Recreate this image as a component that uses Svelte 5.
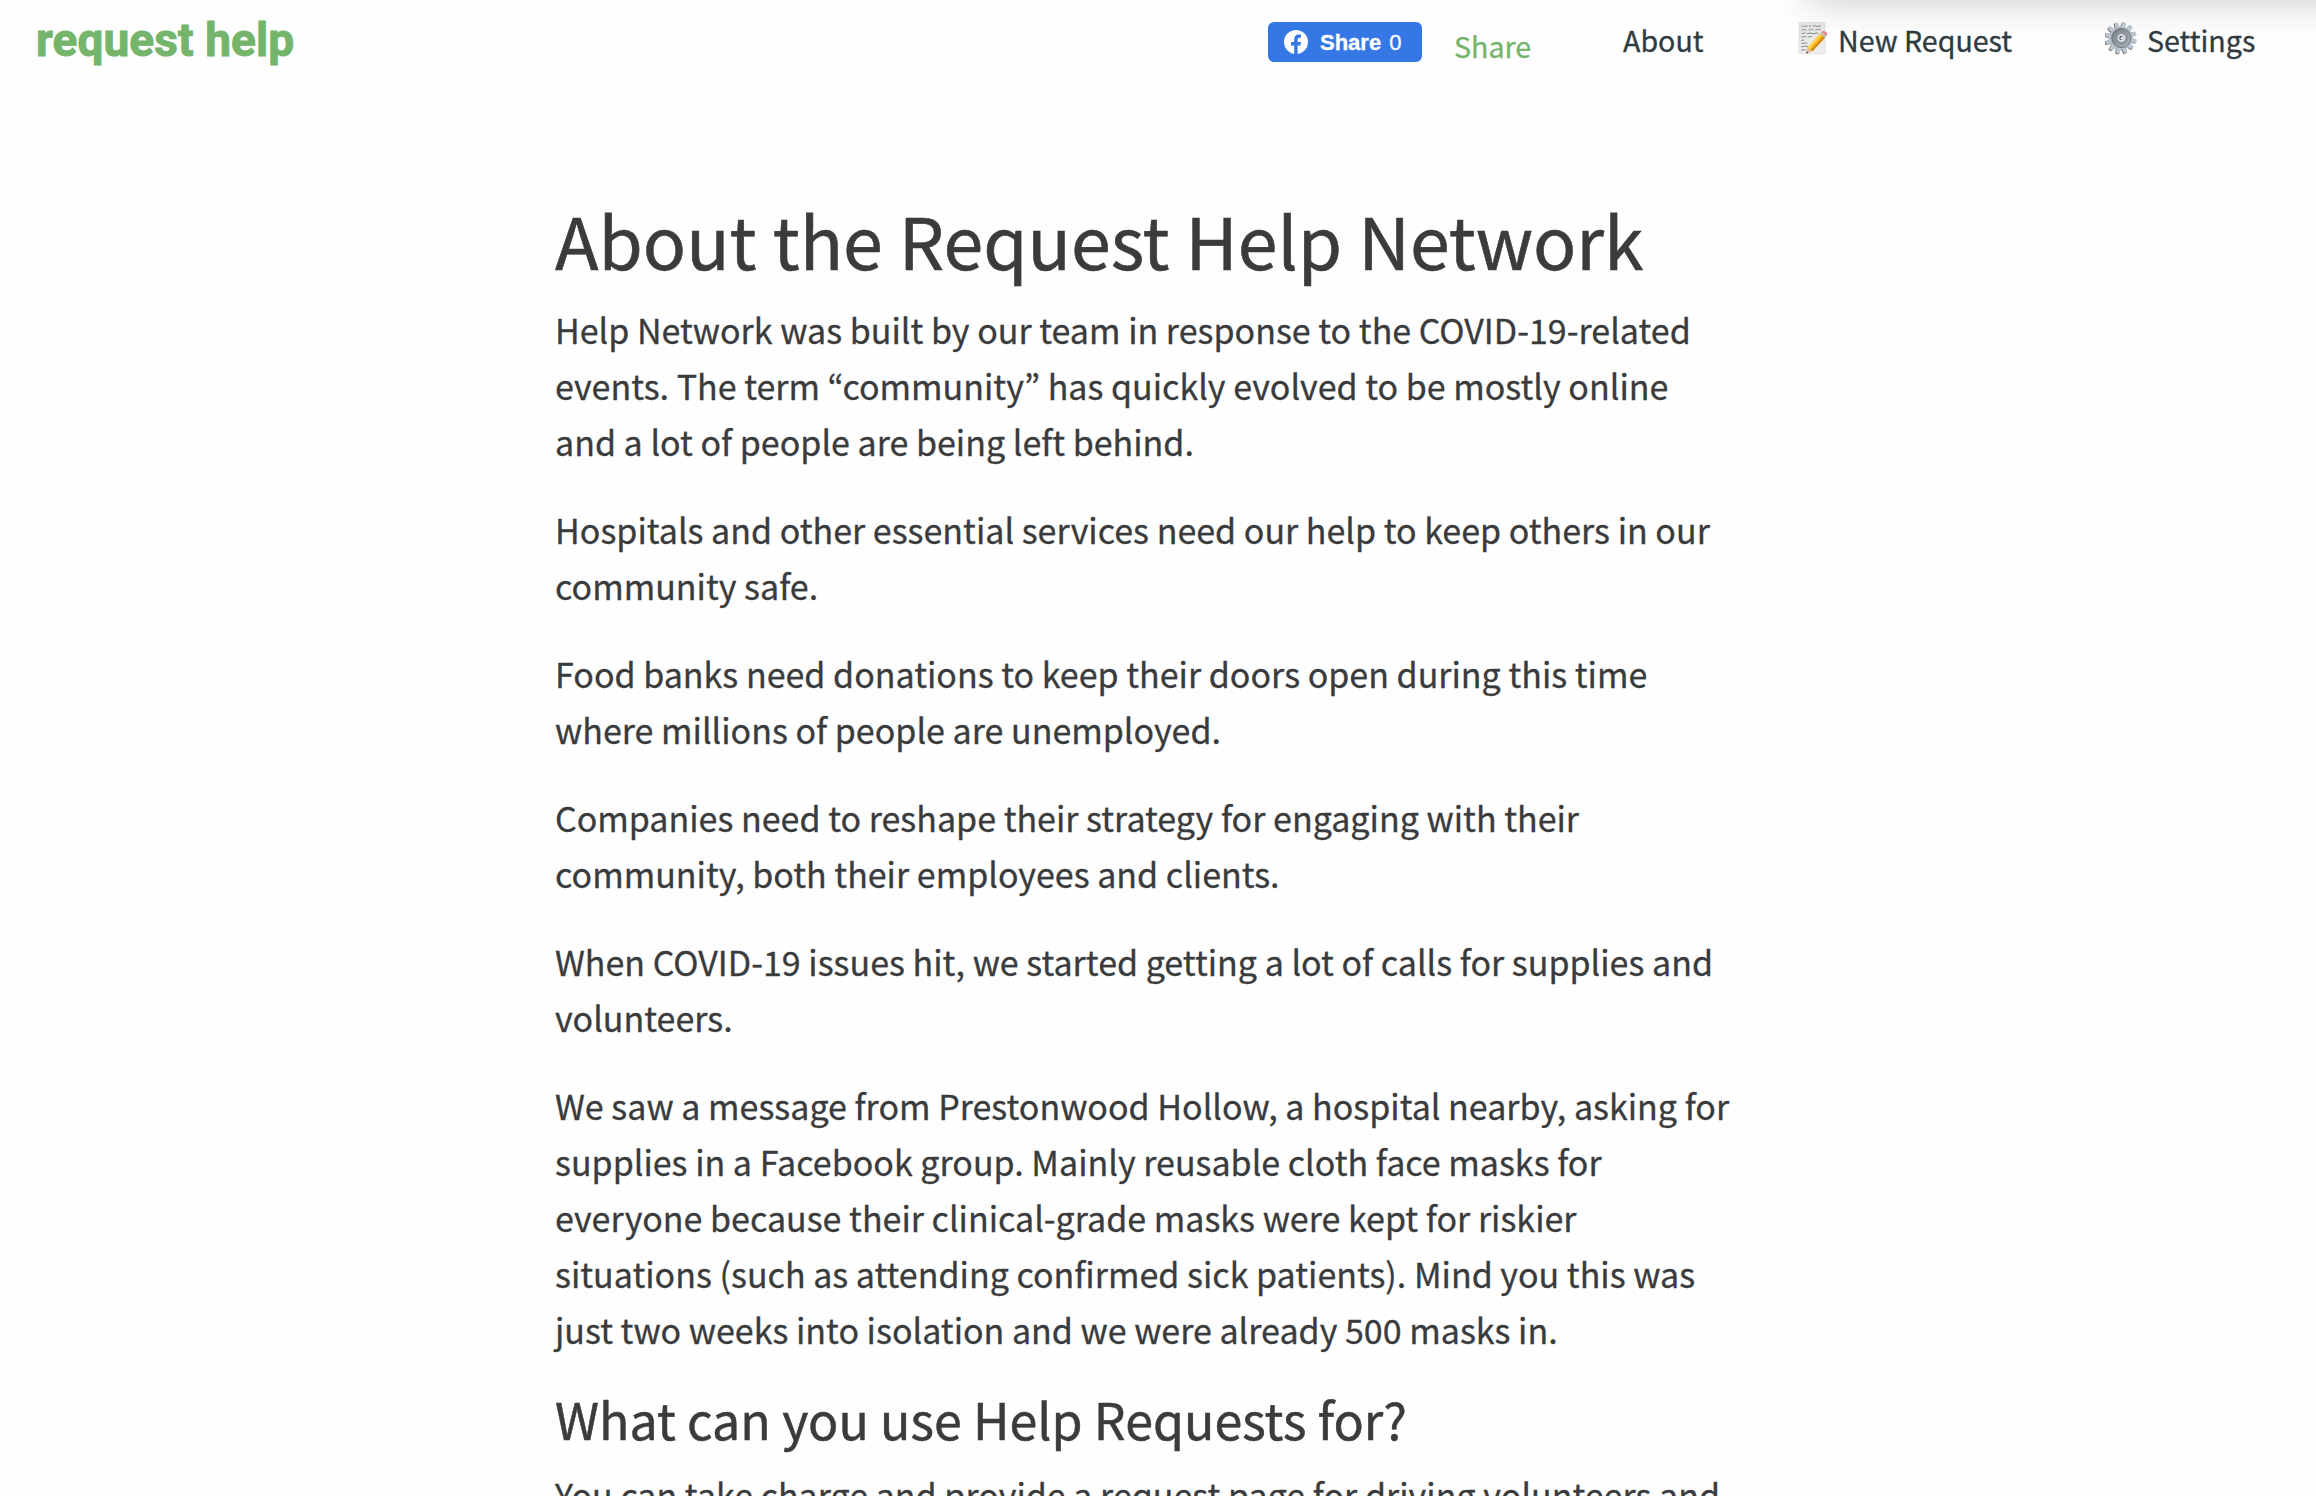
<script lang="ts">
    const paragraphs = [
        'Help Network was built by our team in response to the COVID-19-related events. The term “community” has quickly evolved to be mostly online and a lot of people are being left behind.',
        'Hospitals and other essential services need our help to keep others in our community safe.',
        'Food banks need donations to keep their doors open during this time where millions of people are unemployed.',
        'Companies need to reshape their strategy for engaging with their community, both their employees and clients.',
        'When COVID-19 issues hit, we started getting a lot of calls for supplies and volunteers.',
        'We saw a message from Prestonwood Hollow, a hospital nearby, asking for supplies in a Facebook group. Mainly reusable cloth face masks for everyone because their clinical-grade masks were kept for riskier situations (such as attending confirmed sick patients). Mind you this was just two weeks into isolation and we were already 500 masks in.',
    ]

    let shares = $state(0)

    const teeth = Array.from({ length: 12 }, (_, i) => i * 30 + 12)
</script>

<div class="page">
    <div class="overhang"></div>

    <header class="navbar">
        <a class="brand" href="#home">request help</a>
        <nav class="links">
            <button class="fb-share" onclick={() => shares++}>
                <svg class="fb-icon" viewBox="0 0 24 24" width="24" height="24">
                    <circle cx="12" cy="12" r="12" fill="#fff" />
                    <path
                        d="M10.2 24v-8.5H7V12h3.2V9.300c0-3.100 1.800-4.700 4.600-4.700 1 0 2.200.2 2.200.2v2.900h-1.500c-1.400 0-1.900.9-1.900 1.800V12H17l-.5 3.500h-2.900V24z"
                        fill="#3578e5"
                    />
                </svg>
                <span class="fb-label">Share</span>
                <span class="fb-count">{shares}</span>
            </button>
            <a class="share" href="#share">Share</a>
            <a class="link about" href="#about">About</a>
            <a class="link request" href="#new">
                <svg class="memo" viewBox="0 0 30 34" width="30" height="34">
                    <defs>
                        <linearGradient id="paper" x1="0" y1="0" x2="0" y2="1">
                            <stop offset="0" stop-color="#e2e2e2" />
                            <stop offset="1" stop-color="#efefef" />
                        </linearGradient>
                    </defs>
                    <rect x="1" y="1.5" width="26" height="31" fill="url(#paper)" stroke="#dadada" stroke-width="0.7" />
                    <g fill="none" stroke="#808080" stroke-width="0.9">
                        <path d="M3.500 5.700l2-1 1 1 3-1M11 5.300l2-.5M15 5.300l2-.6 2 .8 4-.6" />
                        <path d="M3.500 9.200l3-.7 2 .8M10.500 9.200l3-.8 2 .7M17.500 9.200l2-.8 3 .6" />
                        <path d="M3.500 12.700l4-.8M9 12.700l3-.6 4 .5 4-.6" />
                        <path d="M3.500 16.200l3-.7 2 .5M10 16l4-.6" />
                        <path d="M3 19.500l3-.5M3.500 22.500l4-.6 2 .4M3 26l3-.8 4 .3M3 29.500l2-.8 3 .3" />
                    </g>
                    <path d="M8.300 32.500l1.400-6 4.700 3.800z" fill="#e5c090" />
                    <path d="M8.300 32.500l.5-2.200 1.700 1.400z" fill="#333" />
                    <path d="M9.700 26.500L22 12.500l5 4.200-12.600 13.600z" fill="#f6b51c" />
                    <path d="M9.700 26.500L22 12.500l1.700 1.400-12.400 14z" fill="#ffd453" />
                    <path d="M12.800 29l12.400-13.800 1.800 1.500-12.600 13.600z" fill="#d58b12" />
                    <path d="M22 12.500l1.500-1.700 5 4.200-1.500 1.700z" fill="#b9bdc0" />
                    <path d="M23.500 10.800c1-1.200 3-1 4.500.2 1.300 1.200 1.700 2.800.5 4z" fill="#ee8189" />
                </svg>
                <span>New Request</span>
            </a>
            <a class="link settings" href="#settings">
                <svg class="gear" viewBox="0 0 32 34" width="32" height="34">
                    <defs>
                        <linearGradient id="steel" x1="0" y1="0" x2="1" y2="1">
                            <stop offset="0" stop-color="#70767f" />
                            <stop offset="1" stop-color="#b8bec5" />
                        </linearGradient>
                    </defs>
                    {#each teeth as angle}
                        <path
                            d="M13.400 7l.9-6h3.400L18.600 7z"
                            fill="#6f645c"
                            transform="translate(-0.7 0.4) rotate({angle} 16 17)"
                        />
                    {/each}
                    {#each teeth as angle}
                        <path d="M13.600 7l.7-5.800h3.400L18.400 7z" fill="#bcc7d5" transform="rotate({angle} 16 17)" />
                    {/each}
                    <circle cx="16" cy="17" r="11.500" fill="#b8c1cd" />
                    <circle cx="16.300" cy="17" r="9.600" fill="url(#steel)" stroke="#666d77" stroke-width="0.9" />
                    <circle cx="16.500" cy="17.300" r="6.600" fill="#8f969f" />
                    <circle cx="16.500" cy="17" r="4.400" fill="#dbe1e8" stroke="#747a83" stroke-width="0.6" />
                    <circle cx="16.300" cy="17" r="2" fill="#4e4a48" />
                    <circle cx="16.900" cy="17.300" r="1.200" fill="#fff" />
                </svg>
                <span>Settings</span>
            </a>
        </nav>
    </header>

    <main class="content">
        <h1>About the Request Help Network</h1>
        {#each paragraphs as text}
            <p>{text}</p>
        {/each}
        <h2>What can you use Help Requests for?</h2>
        <p>You can take charge and provide a request page for driving volunteers and</p>
    </main>
</div>

<style>
    :global(body) {
        background: #fefefe;
    }

    .page {
        position: relative;
        height: 1496px;
        overflow: hidden;
        font-family: 'Noto Sans CJK KR', sans-serif;
        color: #3a3b3d;
        -webkit-text-stroke: 0.3px;
    }

    /* shadow of the panel that sits just above the viewport */
    .overhang {
        position: absolute;
        top: -60px;
        left: 1808px;
        right: -60px;
        height: 56px;
        box-shadow: 0 4px 40px rgba(0, 0, 0, 0.22);
    }

    a {
        text-decoration: none;
        color: inherit;
    }

    .navbar {
        position: relative;
        display: flex;
        justify-content: space-between;
        align-items: flex-start;
        height: 84px;
        padding-left: 36px;
    }

    .brand {
        font-family: Roboto, sans-serif;
        font-weight: 700;
        font-size: 46px;
        line-height: 54px;
        letter-spacing: 0.1px;
        margin-top: 13px;
        color: #74b56b;
        white-space: nowrap;
        -webkit-text-stroke: 1px;
    }

    .links {
        display: flex;
        align-items: flex-start;
        width: 1048px;
        font-size: 28.6px;
        line-height: 40px;
        white-space: nowrap;
    }

    .fb-share {
        display: flex;
        align-items: center;
        box-sizing: border-box;
        width: 154px;
        height: 40px;
        margin-top: 22px;
        padding: 0 0 0 16px;
        border: none;
        border-radius: 6px;
        background: #3578e5;
        color: #fff;
        font-family: 'Liberation Sans', sans-serif;
        font-size: 22px;
        line-height: 26px;
        cursor: pointer;
    }

    .fb-label {
        font-weight: 700;
        margin-left: 12px;
        padding-top: 1px;
    }

    .fb-count {
        margin-left: 8px;
        padding-top: 1px;
    }

    .share {
        margin: 26px 0 0 32px;
        width: 169px;
        color: #74b56b;
    }

    .link {
        display: flex;
        margin-top: 20px;
        color: #2f3b40;
    }

    .about {
        width: 175px;
    }

    .request {
        width: 307px;
    }

    .memo,
    .gear {
        margin: 1px 10px 0 0;
    }

    .content {
        width: 1177px;
        margin: 107px 0 0 555px;
    }

    h1 {
        margin: 0 0 15px;
        font-weight: 400;
        font-size: 71.6px;
        line-height: 96px;
        white-space: nowrap;
        -webkit-text-stroke: 0.6px;
    }

    h2 {
        margin: -6px 0 15px;
        font-weight: 400;
        font-size: 50.15px;
        line-height: 68px;
        -webkit-text-stroke: 0.5px;
    }

    p {
        margin: 0 0 32px;
        font-size: 34.02px;
        line-height: 56px;
    }
</style>
